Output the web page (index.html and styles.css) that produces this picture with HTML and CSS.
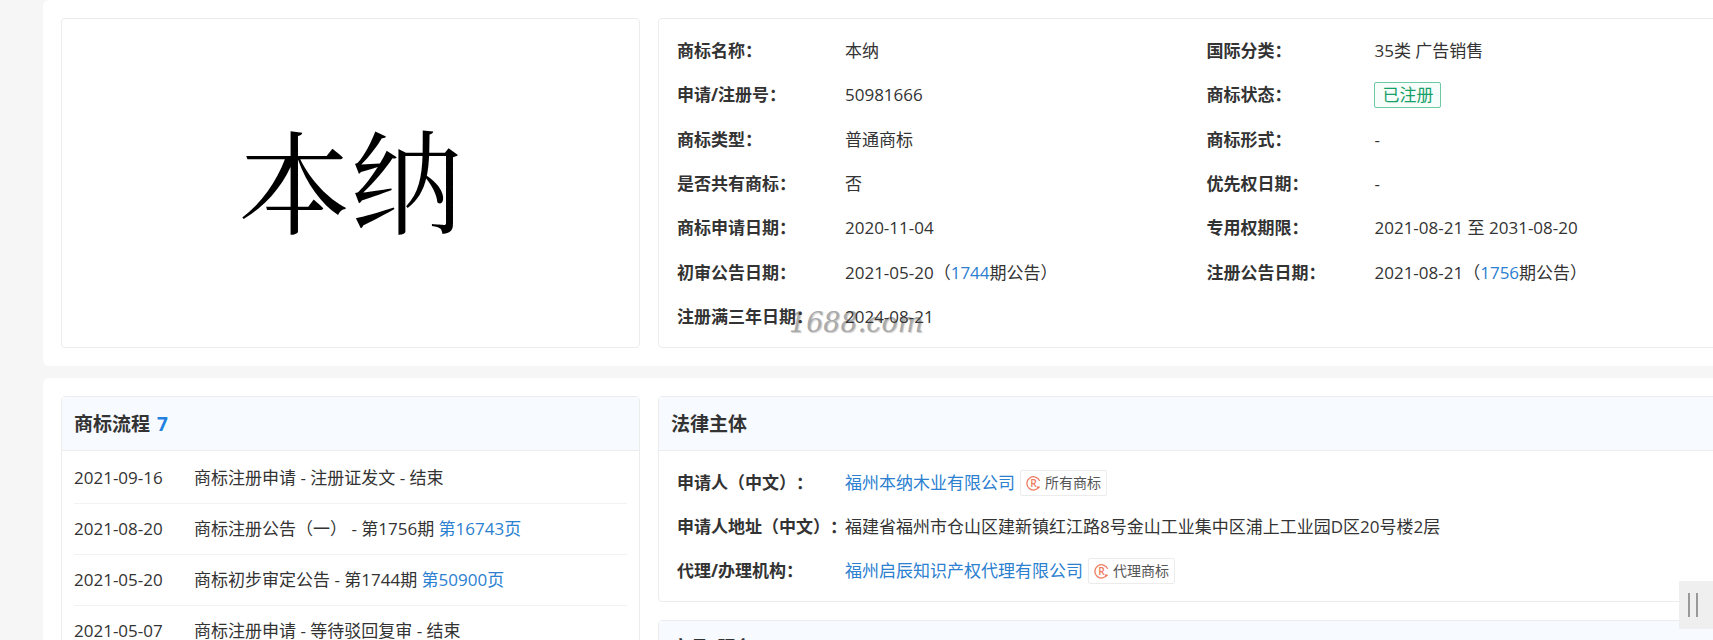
FILE: index.html
```html
<!DOCTYPE html>
<html lang="zh-CN">
<head>
    <meta charset="UTF-8">
    <meta name="viewport" content="width=device-width, initial-scale=1.0">
    <title>本纳 - 商标详情</title>
    <link rel="stylesheet" href="styles.css">
</head>
<body>
    <main class="page">
        <section class="card card-top">
            <div class="panel brand-panel">
                <h1 class="brand-mark">本纳</h1>
            </div>
            <div class="panel info-panel">
                <span class="site-mark" aria-hidden="true">1688.com</span>
                <dl class="info-grid">
                    <div class="info-item"><dt>商标名称：</dt><dd>本纳</dd></div>
                    <div class="info-item"><dt>国际分类：</dt><dd>35类 广告销售</dd></div>
                    <div class="info-item"><dt>申请/注册号：</dt><dd>50981666</dd></div>
                    <div class="info-item"><dt>商标状态：</dt><dd><span class="status">已注册</span></dd></div>
                    <div class="info-item"><dt>商标类型：</dt><dd>普通商标</dd></div>
                    <div class="info-item"><dt>商标形式：</dt><dd>-</dd></div>
                    <div class="info-item"><dt>是否共有商标：</dt><dd>否</dd></div>
                    <div class="info-item"><dt>优先权日期：</dt><dd>-</dd></div>
                    <div class="info-item"><dt>商标申请日期：</dt><dd>2020-11-04</dd></div>
                    <div class="info-item"><dt>专用权期限：</dt><dd>2021-08-21 至 2031-08-20</dd></div>
                    <div class="info-item"><dt>初审公告日期：</dt><dd>2021-05-20（<a href="#">1744</a>期公告）</dd></div>
                    <div class="info-item"><dt>注册公告日期：</dt><dd>2021-08-21（<a href="#">1756</a>期公告）</dd></div>
                    <div class="info-item"><dt>注册满三年日期：</dt><dd>2024-08-21</dd></div>
                </dl>
            </div>
        </section>

        <section class="card">
            <div class="panel">
                <h2 class="panel-title">商标流程 <span class="count">7</span></h2>
                <ul class="process-list">
                    <li><time>2021-09-16</time><span>商标注册申请 - 注册证发文 - 结束</span></li>
                    <li><time>2021-08-20</time><span>商标注册公告（一） - 第1756期 <a href="#">第16743页</a></span></li>
                    <li><time>2021-05-20</time><span>商标初步审定公告 - 第1744期 <a href="#">第50900页</a></span></li>
                    <li><time>2021-05-07</time><span>商标注册申请 - 等待驳回复审 - 结束</span></li>
                </ul>
            </div>
            <div class="column">
                <div class="panel">
                    <h2 class="panel-title">法律主体</h2>
                    <dl class="legal-list">
                        <div class="info-item">
                            <dt>申请人（中文）：</dt>
                            <dd>
                                <a href="#">福州本纳木业有限公司</a>
                                <a class="tag" href="#">
                                    <svg class="tag-icon" viewBox="0 0 16 16" aria-hidden="true">
                                        <path d="M14.6 5.2A7.1 7.1 0 1 0 14.2 11.4M11.6 12H14.6"/>
                                        <text x="8" y="12">R</text>
                                    </svg>
                                    所有商标
                                </a>
                            </dd>
                        </div>
                        <div class="info-item">
                            <dt>申请人地址（中文）：</dt>
                            <dd>福建省福州市仓山区建新镇红江路8号金山工业集中区浦上工业园D区20号楼2层</dd>
                        </div>
                        <div class="info-item">
                            <dt>代理/办理机构：</dt>
                            <dd>
                                <a href="#">福州启辰知识产权代理有限公司</a>
                                <a class="tag" href="#">
                                    <svg class="tag-icon" viewBox="0 0 16 16" aria-hidden="true">
                                        <path d="M14.6 5.2A7.1 7.1 0 1 0 14.2 11.4M11.6 12H14.6"/>
                                        <text x="8" y="12">R</text>
                                    </svg>
                                    代理商标
                                </a>
                            </dd>
                        </div>
                    </dl>
                </div>
                <div class="panel">
                    <h2 class="panel-title">商品/服务</h2>
                </div>
            </div>
        </section>
    </main>

    <button class="drawer-handle" type="button" aria-label="展开侧栏"></button>
</body>
</html>
```

FILE: styles.css
```css
* {
    box-sizing: border-box;
}
body {
    margin: 0;
    background: #f6f6f6;
    color: #333;
    font-family: "Open Sans", "Noto Sans CJK SC", sans-serif;
    font-size: 17px;
    line-height: 26px;
    text-spacing-trim: space-all;
    height: 100vh;
    overflow: hidden;
}
a {
    color: #2b80d0;
    text-decoration: none;
}
dl, dd, ul, h1, h2 {
    margin: 0;
    padding: 0;
}

/* the sheet runs on past the right edge of the window */
.page {
    margin-left: 43px;
    margin-right: -60px;
}
.card {
    display: grid;
    grid-template-columns: 19fr 36fr;
    gap: 18px;
    padding: 18px;
    margin-bottom: 12px;
    background: #fff;
    border-radius: 6px;
}
.card-top {
    border-top-right-radius: 0;
}
.panel {
    position: relative;
    border: 1px solid #ececec;
    border-radius: 4px;
}
.column {
    display: flex;
    flex-direction: column;
    gap: 18px;
}

.brand-panel {
    display: flex;
    align-items: center;
    justify-content: center;
    min-height: 330px;
    padding-bottom: 10px;
}
.brand-mark {
    color: #000;
    font-family: "Noto Serif CJK SC", "Noto Sans CJK SC", serif;
    font-size: 112px;
    font-weight: 400;
    line-height: 1;
}

.info-panel {
    padding: 10px 18px 8px;
}
.info-grid {
    display: grid;
    grid-template-columns: 1fr 1fr;
    height: 100%;
}
.info-item {
    position: relative;
    display: flex;
    align-items: center;
}
.info-item dt {
    flex: 0 0 168px;
    min-width: 0;
    font-weight: 700;
    white-space: nowrap;
}
.info-item dd {
    display: flex;
    align-items: center;
    white-space: pre-wrap;
}
.status {
    padding: 0 7px;
    border: 1px solid #6cc9a4;
    border-radius: 2px;
    background: #f6fdfa;
    color: #16a068;
    line-height: 24px;
}
.site-mark {
    position: absolute;
    left: 130px;
    bottom: 8px;
    color: #aaa;
    font-family: "DejaVu Serif", serif;
    font-size: 27px;
    font-style: italic;
    line-height: 32px;
    text-shadow: 1px 1px 1px #ccc;
}

.panel-title {
    height: 54px;
    padding: 0 12px;
    border-bottom: 1px solid #ececec;
    background: #f7fbff;
    font-size: 19px;
    line-height: 54px;
}
.count {
    margin-left: 2px;
    color: #2181e0;
}
.process-list {
    padding: 2px 12px;
    list-style: none;
}
.process-list li {
    display: flex;
    padding: 12px 0;
    border-bottom: 1px solid #f2f2f2;
}
.process-list time {
    flex: 0 0 120px;
}

.legal-list {
    padding: 10px 18px 8px;
}
.legal-list .info-item {
    height: 44px;
}
.legal-list dd {
    gap: 5px;
    white-space: normal;
}
.tag {
    display: inline-flex;
    align-items: center;
    gap: 4px;
    padding: 0 5px;
    border: 1px solid #ececec;
    border-radius: 2px;
    color: #555;
    font-size: 14px;
    line-height: 24px;
}
.tag-icon {
    width: 15px;
    height: 15px;
    fill: none;
    stroke: #ee7c5e;
    stroke-width: 1.4;
}
.tag-icon text {
    fill: #ee7c5e;
    stroke: none;
    font-size: 11px;
    font-weight: 600;
    text-anchor: middle;
}

.drawer-handle {
    position: fixed;
    right: 0;
    bottom: 11px;
    width: 34px;
    height: 48px;
    padding: 0 0 0 9px;
    border: 0;
    background: #efefef;
}
.drawer-handle::before {
    content: "";
    display: block;
    width: 6px;
    height: 24px;
    border: solid #999;
    border-width: 0 2px;
}
```
